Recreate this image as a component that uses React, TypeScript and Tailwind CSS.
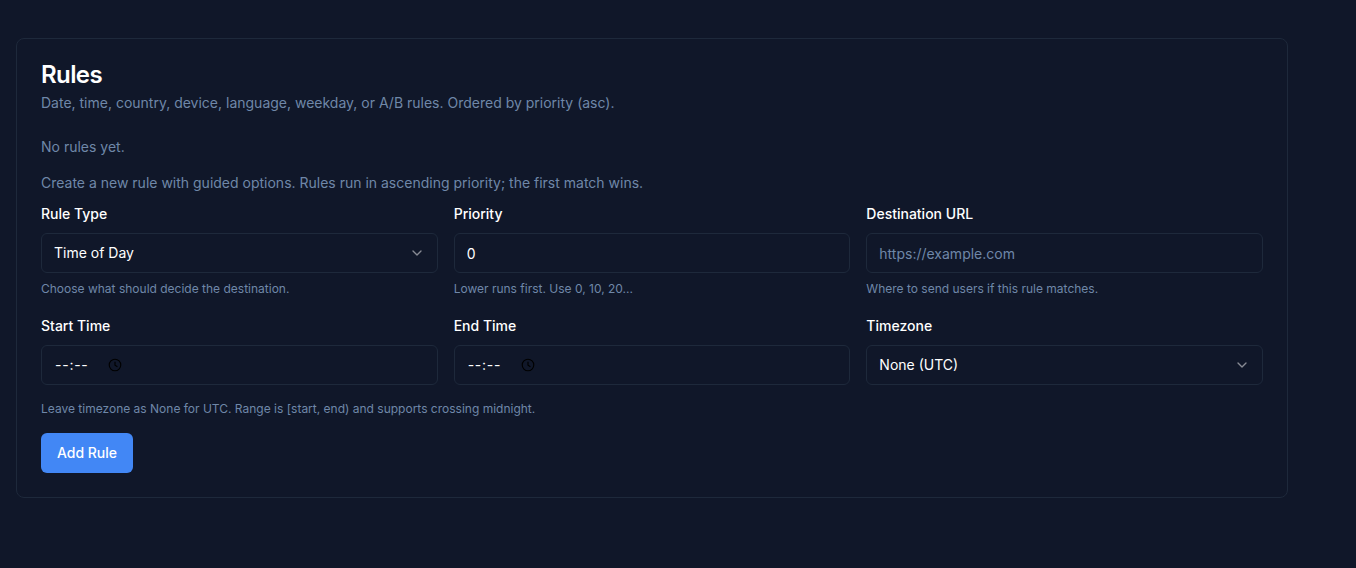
import { ChevronDown } from "lucide-react";

function Field({ label, help, children }: { label: string; help?: string; children: React.ReactNode }) {
  return (
    <div className="flex flex-col">
      <label className="mb-3 text-sm leading-none font-medium text-white">{label}</label>
      {children}
      {help && <p className="mt-2 text-xs leading-4 text-[#6f87a8]">{help}</p>}
    </div>
  );
}

const box =
  "flex h-10 w-full items-center justify-between rounded-md border border-[#1e293b] bg-[#101729] px-3 text-sm text-white";

function Select({ value }: { value: string }) {
  return (
    <button type="button" className={box}>
      <span>{value}</span>
      <ChevronDown className="h-4 w-4 text-white opacity-50" />
    </button>
  );
}

function TimeInput() {
  return (
    <div className="flex h-10 w-full items-center rounded-md border border-[#1e293b] bg-[#101729] pl-[13px] text-sm text-white">
      <span className="w-[53px] tracking-[0.75px]">--:--</span>
      <svg viewBox="0 0 16 16" className="h-[14px] w-[14px]" fill="none" stroke="#000" strokeWidth="1.3">
        <circle cx="8" cy="8" r="6.6" />
        <path d="M8 4.2V8.3L10.8 10" />
      </svg>
    </div>
  );
}

export default function App() {
  return (
    <div className="min-h-[568px] bg-[#101729] pl-4 pt-[38px] font-['Inter',sans-serif]">
      <section className="w-[1272px] rounded-lg border border-[#1e293b] bg-[#101729] p-6">
        <h2 className="text-2xl leading-6 font-semibold tracking-tight text-white">Rules</h2>
        <p className="mt-1.5 text-sm text-[#6f87a8]">
          Date, time, country, device, language, weekday, or A/B rules. Ordered by priority (asc).
        </p>
        <p className="mt-6 text-sm text-[#6f87a8]">No rules yet.</p>
        <p className="mt-4 text-sm text-[#6f87a8]">
          Create a new rule with guided options. Rules run in ascending priority; the first match wins.
        </p>
        <div className="mt-3.5 grid grid-cols-3 gap-x-4 gap-y-[22px]">
          <Field label="Rule Type" help="Choose what should decide the destination.">
            <Select value="Time of Day" />
          </Field>
          <Field label="Priority" help="Lower runs first. Use 0, 10, 20...">
            <input className={box} type="number" defaultValue={0} />
          </Field>
          <Field label="Destination URL" help="Where to send users if this rule matches.">
            <input className={`${box} placeholder:text-[#6f87a8]`} placeholder="https://example.com" />
          </Field>
          <Field label="Start Time">
            <TimeInput />
          </Field>
          <Field label="End Time">
            <TimeInput />
          </Field>
          <Field label="Timezone">
            <Select value="None (UTC)" />
          </Field>
        </div>
        <p className="mt-4 text-xs leading-4 text-[#6f87a8]">
          Leave timezone as None for UTC. Range is [start, end) and supports crossing midnight.
        </p>
        <button type="button" className="mt-4 h-10 w-[92px] rounded-md bg-[#4287f5] text-sm font-medium text-white">
          Add Rule
        </button>
      </section>
    </div>
  );
}
